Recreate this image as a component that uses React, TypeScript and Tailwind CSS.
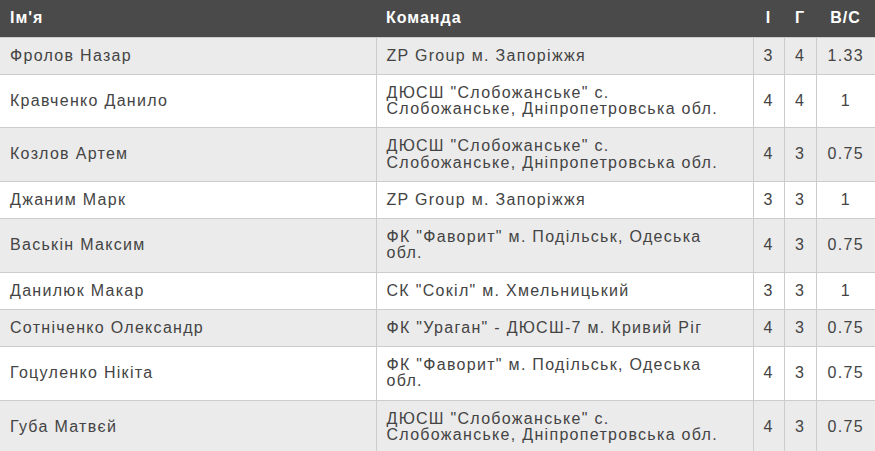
import React from "react";

const rows: [string, string, number, number, string][] = [
  ["Фролов Назар", "ZP Group м. Запоріжжя", 3, 4, "1.33"],
  ["Кравченко Данило", "ДЮСШ \"Слобожанське\" с. Слобожанське, Дніпропетровська обл.", 4, 4, "1"],
  ["Козлов Артем", "ДЮСШ \"Слобожанське\" с. Слобожанське, Дніпропетровська обл.", 4, 3, "0.75"],
  ["Джаним Марк", "ZP Group м. Запоріжжя", 3, 3, "1"],
  ["Васькін Максим", "ФК \"Фаворит\" м. Подільськ, Одеська обл.", 4, 3, "0.75"],
  ["Данилюк Макар", "СК \"Сокіл\" м. Хмельницький", 3, 3, "1"],
  ["Сотніченко Олександр", "ФК \"Ураган\" - ДЮСШ-7 м. Кривий Ріг", 4, 3, "0.75"],
  ["Гоцуленко Нікіта", "ФК \"Фаворит\" м. Подільськ, Одеська обл.", 4, 3, "0.75"],
  ["Губа Матвєй", "ДЮСШ \"Слобожанське\" с. Слобожанське, Дніпропетровська обл.", 4, 3, "0.75"],
];

export default function App() {
  return (
    <div className="w-[875px] bg-white" style={{ fontFamily: '"Liberation Sans", Arial, sans-serif' }}>
      <table className="w-[875px] table-fixed border-collapse text-[16px] leading-[16.25px] text-[#444] tracking-[1.3px]">
        <colgroup>
          <col className="w-[376px]" />
          <col className="w-[377px]" />
          <col className="w-[31px]" />
          <col className="w-[32px]" />
          <col className="w-[59px]" />
        </colgroup>
        <thead>
          <tr className="bg-[#4a4a4a] text-white h-[37px]">
            <th className="px-[10px] text-left font-bold tracking-[1px]">Ім'я</th>
            <th className="px-[10px] text-left font-bold tracking-[1px]">Команда</th>
            <th className="text-center font-bold tracking-[1px]">І</th>
            <th className="text-center font-bold tracking-[1px]">Г</th>
            <th className="text-center font-bold tracking-[1px]">В/С</th>
          </tr>
        </thead>
        <tbody>
          {rows.map((r, i) => (
            <tr key={i} className={i % 2 === 0 ? "bg-[#ebebeb]" : "bg-white"}>
              <td className="border border-[#cccccc] border-l-0 px-[10px] py-[10px] align-middle">{r[0]}</td>
              <td className="border border-[#cccccc] px-[10px] py-[10px] align-middle">{r[1]}</td>
              <td className="border border-[#cccccc] py-[10px] text-center align-middle">{r[2]}</td>
              <td className="border border-[#cccccc] py-[10px] text-center align-middle">{r[3]}</td>
              <td className="border border-[#cccccc] border-r-0 py-[10px] text-center align-middle">{r[4]}</td>
            </tr>
          ))}
        </tbody>
      </table>
    </div>
  );
}
